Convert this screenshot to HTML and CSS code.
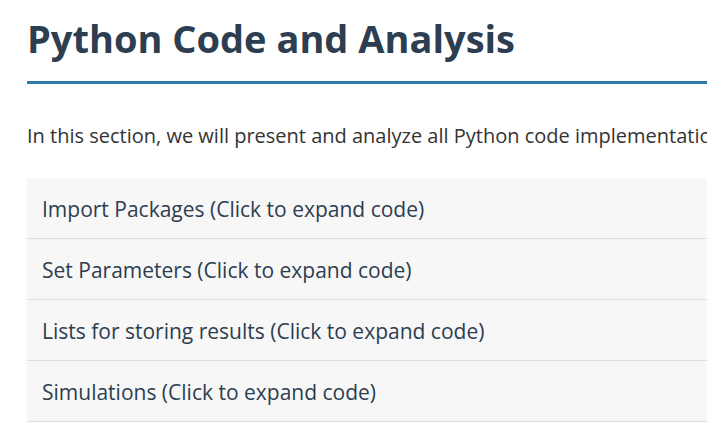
FILE: index.html
```html
<!DOCTYPE html>
<html lang="en">
<head>
<meta charset="utf-8">
<meta name="viewport" content="width=device-width, initial-scale=1">
<title>Python Code and Analysis</title>
<link rel="stylesheet" href="styles.css">
</head>
<body>
<main class="section">
  <h1 class="title">Python Code and Analysis</h1>
  <p class="intro">In this section, we will present and analyze all Python code implementatio</p>
  <div class="code-list">
    <button class="code-toggle" type="button">Import Packages (Click to expand code)</button>
    <button class="code-toggle" type="button">Set Parameters (Click to expand code)</button>
    <button class="code-toggle" type="button">Lists for storing results (Click to expand code)</button>
    <button class="code-toggle" type="button">Simulations (Click to expand code)</button>
  </div>
</main>
</body>
</html>
```
FILE: styles.css
```css
body {
  margin: 0;
  background: #fff;
  color: #333;
  font-family: "Segoe UI", "Open Sans", "Noto Sans", sans-serif;
  overflow: hidden;
}

.section {
  padding: 12px 0 0 27px;
}

.title {
  margin: 0 0 39px;
  padding-bottom: 17px;
  border-bottom: 3px solid #2f7cab;
  color: #2c3e50;
  font-size: 38px;
  font-weight: 700;
  line-height: 52px;
}

.intro {
  margin: 0 0 29px;
  font-size: 20px;
  line-height: 26px;
  white-space: nowrap;
}

.code-list {
  display: flex;
  flex-direction: column;
}

.code-toggle {
  padding: 17px 15px 15px;
  border: 0;
  border-bottom: 1px solid #ddd;
  background: #f7f7f7;
  color: #2c3e50;
  font: inherit;
  font-size: 21px;
  line-height: 28px;
  text-align: left;
  cursor: pointer;
}
```
